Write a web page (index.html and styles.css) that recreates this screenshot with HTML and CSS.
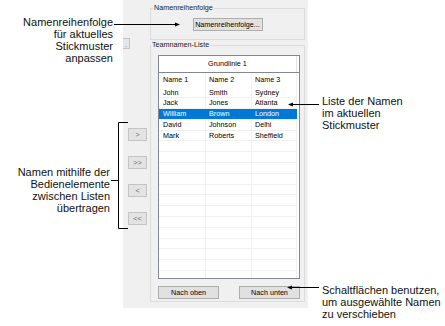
FILE: index.html
```html
<!DOCTYPE html>
<html lang="de">
<head>
  <meta charset="UTF-8" />
  <meta name="viewport" content="width=device-width, initial-scale=1.0" />
  <title>Teamnamen-Liste</title>
  <link rel="stylesheet" href="styles.css">
</head>
<body>
  <div class="page">
    <div class="notes-left">
      <p class="note note-order">Namenreihenfolge<br>für aktuelles<br>Stickmuster<br>anpassen</p>
      <p class="note note-transfer">Namen mithilfe der<br>Bedienelemente<br>zwischen Listen<br>übertragen</p>
    </div>

    <div class="panel">
      <div class="side">
        <button class="btn btn-stub">.</button>
        <div class="move-buttons">
          <button class="btn btn-move">&gt;</button>
          <button class="btn btn-move">&gt;&gt;</button>
          <button class="btn btn-move">&lt;</button>
          <button class="btn btn-move">&lt;&lt;</button>
        </div>
      </div>

      <div class="groups">
        <fieldset class="group group-order">
          <legend>Namenreihenfolge</legend>
          <div class="order-row">
            <button class="btn btn-order">Namenreihenfolge...</button>
          </div>
        </fieldset>

        <fieldset class="group group-list">
          <legend>Teamnamen-Liste</legend>
          <div class="list">
            <div class="list-head"><div class="head-cell">Grundlinie 1</div></div>
            <div class="list-body" id="listBody"></div>
          </div>
          <div class="list-buttons">
            <button class="btn btn-list">Nach oben</button>
            <button class="btn btn-list">Nach unten</button>
          </div>
        </fieldset>
      </div>
    </div>

    <div class="notes-right">
      <p class="note note-list">Liste der Namen<br>im aktuellen<br>Stickmuster</p>
      <p class="note note-move">Schaltflächen benutzen,<br>um ausgewählte Namen<br>zu verschieben</p>
    </div>

    <svg class="leaders" width="445" height="326" viewBox="0 0 445 326">
      <g stroke="#000" stroke-width="1" fill="none">
        <path d="M114 24.5H176" />
        <path d="M128 122.5H118.5V228.5H128" />
        <path d="M111 180.5H118.5" />
        <path d="M292 104.5H319" />
        <path d="M291 287.5H319" />
      </g>
      <g fill="#000">
        <polygon points="180,24.5 175,22.5 175,26.5" />
        <polygon points="288,104.5 293,102.5 293,106.5" />
        <polygon points="287,287.5 292,285.5 292,289.5" />
      </g>
    </svg>
  </div>

  <script>
    const header = ['Name 1', 'Name 2', 'Name 3'];
    const names = [
      ['John', 'Smith', 'Sydney'],
      ['Jack', 'Jones', 'Atlanta'],
      ['William', 'Brown', 'London'],
      ['David', 'Johnson', 'Delhi'],
      ['Mark', 'Roberts', 'Sheffield']
    ];
    const selectedRow = 2;
    const totalRows = 18;

    function makeRow(values, className) {
      const row = document.createElement('div');
      row.className = className;
      values.forEach(v => {
        const cell = document.createElement('div');
        cell.className = 'cell';
        cell.textContent = v;
        row.appendChild(cell);
      });
      return row;
    }

    function buildList() {
      const body = document.getElementById('listBody');
      body.appendChild(makeRow(header, 'row row-title'));
      for (let i = 0; i < totalRows; i++) {
        const values = names[i] || ['', '', ''];
        const cls = i === selectedRow ? 'row selected' : 'row';
        body.appendChild(makeRow(values, cls));
      }
    }

    buildList();
  </script>
</body>
</html>
```

FILE: styles.css
```css
body {
  margin: 0;
  background: #fff;
  color: #000;
  font-family: "Liberation Sans", Arial, sans-serif;
}

.page {
  position: relative;
  display: grid;
  grid-template-columns: 123px 185px 1fr;
  width: 445px;
  height: 326px;
  overflow: hidden;
}

/* annotations */
.note {
  margin: 0;
  font-size: 11px;
  line-height: 12px;
  color: #111;
}

.notes-left {
  display: flex;
  flex-direction: column;
  align-items: flex-end;
  text-align: right;
}

.note-order {
  margin-top: 16px;
  padding-right: 10px;
}

.note-transfer {
  margin-top: 102px;
  padding-right: 13px;
}

.notes-right {
  display: flex;
  flex-direction: column;
  padding-left: 14px;
}

.note-list {
  margin-top: 95px;
}

.note-move {
  margin-top: 153px;
}

.leaders {
  position: absolute;
  top: 0;
  left: 0;
  pointer-events: none;
}

/* dialog panel */
.panel {
  height: 308px;
  background: #f0f0f0;
  display: flex;
  align-items: flex-start;
  font-size: 7.2px;
}

.btn {
  margin: 0;
  padding: 0;
  height: 13px;
  line-height: 11px;
  font-family: inherit;
  font-size: 7.2px;
  color: #000;
  background: #e1e1e1;
  border: 1px solid #adadad;
  border-radius: 0;
}

.side {
  width: 27px;
  display: flex;
  flex-direction: column;
}

.btn-stub {
  width: 7px;
  height: 11px;
  margin-top: 38px;
  border-left: none;
  color: #777;
  background: #e6e6e6;
  border-color: #c4c4c4;
}

.move-buttons {
  display: flex;
  flex-direction: column;
  gap: 15px;
  margin-top: 79px;
  margin-left: 5px;
}

.btn-move {
  width: 19px;
  color: #6d6d6d;
  background: #e3e3e3;
  border-color: #c4c4c4;
}

.groups {
  width: 155px;
}

.group {
  margin: 0;
  min-width: 0;
  border: 1px solid #dcdcdc;
}

.group legend {
  margin-left: -7px;
  padding: 0 1px;
  font-size: 7.2px;
  line-height: 10px;
  color: #222;
}

.group-order {
  margin-top: 3px;
  padding: 5px 0 8px;
}

.group-order legend {
  margin-left: 2px;
}

.order-row {
  display: flex;
  justify-content: center;
}

.btn-order {
  width: 70px;
}

.group-list {
  padding: 5px 4px 2px 7px;
}

.list {
  width: 142px;
  height: 224px;
  box-sizing: border-box;
  border: 1px solid #828790;
  background: #fff;
  overflow: hidden;
}

.list-head {
  display: flex;
  height: 16px;
  border-bottom: 1px solid #828790;
}

.head-cell {
  width: 137px;
  border-right: 1px solid #e3e3e3;
  text-align: center;
  line-height: 16px;
}

.row {
  display: grid;
  grid-template-columns: 47px 46px 45px;
  width: 138px;
  height: 10.8px;
  box-sizing: border-box;
  border-bottom: 1px solid #f0f0f0;
  line-height: 9.8px;
}

.row-title {
  height: 14.5px;
  border-bottom: none;
  line-height: 14.5px;
}

.cell {
  padding-left: 3px;
  border-right: 1px solid #f0f0f0;
  white-space: nowrap;
  overflow: hidden;
}

.cell:first-child {
  padding-left: 4px;
}

.row.selected {
  background: #0078d7;
  color: #fff;
}

.row.selected .cell {
  border-right-color: transparent;
}

.list-buttons {
  display: flex;
  justify-content: space-between;
  width: 142px;
  margin-top: 7px;
}

.btn-list {
  width: 61px;
}
```
